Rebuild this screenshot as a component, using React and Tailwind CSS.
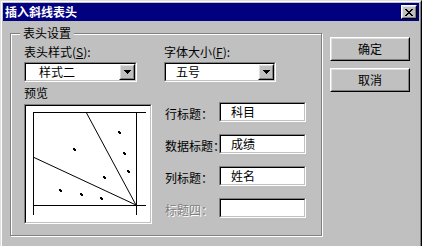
import React from "react";

const FONT = { fontFamily: '"Noto Sans CJK SC", "Liberation Sans", sans-serif' };

function Sunken({ className = "", innerClass = "", children }) {
  return (
    <div className={"border border-t-[#808080] border-l-[#808080] border-r-white border-b-white " + className}>
      <div className={"h-full w-full border border-t-black border-l-black border-r-[#c0c0c0] border-b-[#c0c0c0] " + innerClass}>
        {children}
      </div>
    </div>
  );
}

function Raised({ className = "", innerClass = "", children }) {
  return (
    <div className={"border border-t-white border-l-white border-r-black border-b-black " + className}>
      <div className={"h-full w-full border border-t-[#dfdfdf] border-l-[#dfdfdf] border-r-[#808080] border-b-[#808080] bg-[#c0c0c0] " + innerClass}>
        {children}
      </div>
    </div>
  );
}

function Combo({ value, width, pl }) {
  return (
    <Sunken className={"h-[20px] " + width} innerClass="bg-white flex items-center">
      <span className={"flex-1 text-[12px] leading-[12px] text-black " + pl}>{value}</span>
      <Raised className="h-[16px] w-[16px] shrink-0" innerClass="flex items-center justify-center">
        <svg width="7" height="4" viewBox="0 0 7 4" shapeRendering="crispEdges">
          <path d="M0 0h7v1H0zM1 1h5v1H1zM2 2h3v1H2zM3 3h1v1H3z" fill="#000" />
        </svg>
      </Raised>
    </Sunken>
  );
}

function Field({ label, value, disabled }) {
  return (
    <div className="flex h-[20px] items-center">
      <div className="w-[55px] shrink-0 whitespace-nowrap pl-[1px]">
        <span
          className={"text-[12px] leading-[12px] " + (disabled ? "text-[#808080] [text-shadow:1px_1px_0_#fff]" : "text-black")}
        >
          {label}
        </span>
      </div>
      <Sunken className="h-[20px] w-[87px]" innerClass="bg-white flex items-center pl-[10px]">
        <span className="text-[12px] leading-[12px] text-black">{value}</span>
      </Sunken>
    </div>
  );
}

function Preview() {
  const dots = [
    [47, 42], [92, 25], [97, 46], [101, 64], [77, 70], [33, 83], [54, 87], [74, 91],
  ];
  return (
    <Sunken className="h-[120px] w-[128px]" innerClass="bg-white">
      <svg width="124" height="116" viewBox="0 0 124 116" shapeRendering="crispEdges" className="block">
        <g stroke="#000" strokeWidth="1" fill="none">
          <path d="M7 6.5H120" />
          <path d="M7 99.5H120" />
          <path d="M7.5 6V109" />
          <path d="M110.5 6V109" />
        </g>
        <g stroke="#000" strokeWidth="1" fill="none" shapeRendering="auto">
          <path d="M110 99L60 6" />
          <path d="M110 99L7 51" />
        </g>
        <g fill="#000">
          {dots.map(([x, y], i) => (
            <path key={i} d={`M${x} ${y}h2v1h1v2h-2v-1h-1z`} />
          ))}
        </g>
      </svg>
    </Sunken>
  );
}

export default function App() {
  return (
    <div style={FONT} className="h-[246px] w-[422px] overflow-hidden bg-[#c0c0c0]">
      <div className="h-[250px] w-[422px] border border-t-[#dfdfdf] border-l-[#dfdfdf] border-r-black border-b-black">
        <div className="h-full w-full border border-t-white border-l-white border-r-[#808080] border-b-[#808080] p-[1px]">
          {/* Title bar */}
          <div className="flex h-[18px] items-center bg-[#000080] pl-[2px] pr-[2px]">
            <span className="flex-1 text-[12px] font-bold leading-[12px] text-white">插入斜线表头</span>
            <Raised className="h-[14px] w-[16px]" innerClass="flex items-center justify-center">
              <svg width="8" height="7" viewBox="0 0 8 7" shapeRendering="crispEdges">
                <path
                  d="M0 0h2v1H0zM6 0h2v1H6zM1 1h2v1H1zM5 1h2v1H5zM2 2h4v1H2zM3 3h2v1H3zM2 4h4v1H2zM1 5h2v1H1zM5 5h2v1H5zM0 6h2v1H0zM6 6h2v1H6z"
                  fill="#000"
                />
              </svg>
            </Raised>
          </div>

          {/* Body */}
          <div className="flex pl-[7px] pt-[12px]">
            {/* Group box */}
            <div className="relative h-[203px] w-[312px] border border-[#808080] shadow-[inset_1px_1px_0_#fff,1px_1px_0_#fff]">
              <span className="absolute left-[9px] top-[-7px] bg-[#c0c0c0] px-[3px] text-[12px] leading-[12px] text-black">
                表头设置
              </span>
              <div className="flex gap-[12px] pl-[13px] pt-[12px]">
                {/* Left column */}
                <div className="flex w-[128px] flex-col">
                  <div className="h-[12px] text-[12px] leading-[12px] text-black">
                    表头样式(<span className="underline">S</span>):
                  </div>
                  <div className="mt-[4px]">
                    <Combo value="样式二" width="w-[113px]" pl="pl-[13px]" />
                  </div>
                  <div className="mt-[5px] h-[12px] text-[12px] leading-[12px] text-black">预览</div>
                  <div className="mt-[5px]">
                    <Preview />
                  </div>
                </div>
                {/* Right column */}
                <div className="flex flex-col">
                  <div className="h-[12px] text-[12px] leading-[12px] text-black">
                    字体大小(<span className="underline">F</span>):
                  </div>
                  <div className="mt-[4px]">
                    <Combo value="五号" width="w-[112px]" pl="pl-[10px]" />
                  </div>
                  <div className="mt-[20px] flex flex-col gap-[12px]">
                    <Field label="行标题：" value="科目" />
                    <Field label="数据标题：" value="成绩" />
                    <Field label="列标题：" value="姓名" />
                    <Field label="标题四：" value="" disabled />
                  </div>
                </div>
              </div>
            </div>

            {/* Buttons */}
            <div className="ml-[8px] flex flex-col gap-[7px] pt-[4px]">
              <Raised className="h-[24px] w-[80px]" innerClass="flex items-center justify-center">
                <span className="text-[12px] leading-[12px] text-black">确定</span>
              </Raised>
              <Raised className="h-[24px] w-[80px]" innerClass="flex items-center justify-center">
                <span className="text-[12px] leading-[12px] text-black">取消</span>
              </Raised>
            </div>
          </div>
        </div>
      </div>
    </div>
  );
}
